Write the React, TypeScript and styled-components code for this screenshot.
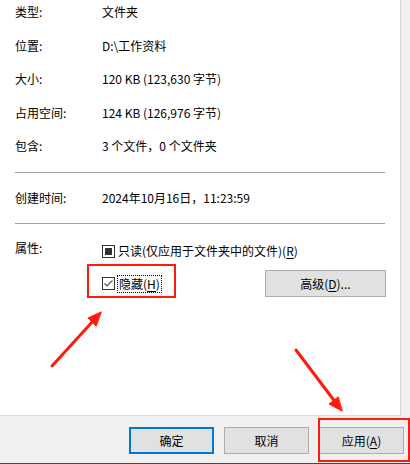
import React from "react";
import styled, { createGlobalStyle } from "styled-components";

const Global = createGlobalStyle`
  html, body {
    margin: 0;
    padding: 0;
    background: #f0f0f0;
  }
  body {
    font-family: "Noto Sans CJK SC", "Microsoft YaHei", sans-serif;
    font-size: 12px;
    color: #000000;
  }
`;

const Dialog = styled.div`
  position: relative;
  width: 410px;
  height: 464px;
  overflow: hidden;
  display: flex;
  flex-direction: column;
  background: #f0f0f0;
`;

const Panel = styled.div`
  width: 401px;
  height: 416px;
  box-sizing: border-box;
  background: #ffffff;
  border-right: 1px solid #d9d9d9;
  border-bottom: 1px solid #d9d9d9;
  padding: 4px 0 0 15px;
  display: flex;
  flex-direction: column;
`;

const InfoList = styled.div`
  display: flex;
  flex-direction: column;
  gap: 17.5px;
`;

const Row = styled.div`
  display: flex;
  height: 16px;
  align-items: center;
  line-height: 16px;
  white-space: nowrap;
`;

const Label = styled.span`
  width: 87px;
  flex: none;
`;

const Value = styled.span``;

const Divider = styled.div<{ $before: number; $after: number }>`
  width: 370px;
  height: 1px;
  background: #a0a0a0;
  margin: ${(p) => p.$before}px 0 ${(p) => p.$after}px;
`;

const AttrRow = styled.div`
  display: flex;
  white-space: nowrap;
`;

const AttrLabel = styled.span`
  width: 87px;
  flex: none;
  line-height: 16px;
  margin-top: -2px;
`;

const AttrBody = styled.div`
  display: flex;
  flex-direction: column;
  gap: 10px;
`;

const CheckLine = styled.div`
  display: flex;
  align-items: center;
  height: 18px;
`;

const Box = styled.span`
  width: 13px;
  height: 13px;
  box-sizing: border-box;
  border: 1px solid #333333;
  background: #ffffff;
  display: inline-flex;
  align-items: center;
  justify-content: center;
  flex: none;
`;

const Fill = styled.span`
  width: 7px;
  height: 7px;
  background: #333333;
`;

const CheckText = styled.span<{ $focus?: boolean }>`
  margin-left: ${(p) => (p.$focus ? "2px" : "3px")};
  padding: ${(p) => (p.$focus ? "0 1px" : "0")};
  border: ${(p) => (p.$focus ? "1px dotted #000000" : "none")};
  line-height: 16px;
`;

const Key = styled.span`
  text-decoration: underline;
  text-underline-offset: 2px;
`;

const HiddenLine = styled.div`
  display: flex;
  align-items: center;
`;

const Spacer = styled.div`
  width: 103px;
  flex: none;
`;

const Button = styled.button<{ $primary?: boolean; $w?: number }>`
  width: ${(p) => p.$w ?? 85}px;
  height: 27px;
  box-sizing: border-box;
  background: #e1e1e1;
  border: ${(p) => (p.$primary ? "2px solid #0078d7" : "1px solid #adadad")};
  font-family: inherit;
  font-size: 12px;
  color: #000000;
  padding: 0;
  flex: none;
`;

const Footer = styled.div`
  flex: 1;
  box-sizing: border-box;
  border-bottom: 1px solid #444444;
  display: flex;
  justify-content: flex-end;
  gap: 10px;
  padding: 11px 6px 0 0;
`;

const Mark = styled.div<{ $x: number; $y: number; $w: number; $h: number }>`
  position: absolute;
  left: ${(p) => p.$x}px;
  top: ${(p) => p.$y}px;
  width: ${(p) => p.$w}px;
  height: ${(p) => p.$h}px;
  box-sizing: border-box;
  border: 2px solid #ff1a0a;
  pointer-events: none;
`;

const Arrows = styled.svg`
  position: absolute;
  left: 0;
  top: 0;
  pointer-events: none;
`;

const info: [string, string][] = [
  ["类型:", "文件夹"],
  ["位置:", "D:\\工作资料"],
  ["大小:", "120 KB (123,630 字节)"],
  ["占用空间:", "124 KB (126,976 字节)"],
  ["包含:", "3 个文件，0 个文件夹"],
];

export default function App() {
  return (
    <Dialog>
      <Global />
      <Panel>
        <InfoList>
          {info.map(([k, v]) => (
            <Row key={k}>
              <Label>{k}</Label>
              <Value>{v}</Value>
            </Row>
          ))}
        </InfoList>
        <Divider $before={18} $after={17} />
        <Row>
          <Label>创建时间:</Label>
          <Value>2024年10月16日，11:23:59</Value>
        </Row>
        <Divider $before={17} $after={18} />
        <AttrRow>
          <AttrLabel>属性:</AttrLabel>
          <AttrBody>
            <CheckLine>
              <Box>
                <Fill />
              </Box>
              <CheckText>
                只读(仅应用于文件夹中的文件)(<Key>R</Key>)
              </CheckText>
            </CheckLine>
            <HiddenLine>
              <CheckLine>
                <Box>
                  <svg width="11" height="11" viewBox="0 0 11 11">
                    <path d="M1.5 5.5 L4 8 L9.5 2.5" fill="none" stroke="#555" strokeWidth="1.2" />
                  </svg>
                </Box>
                <CheckText $focus>
                  隐藏(<Key>H</Key>)
                </CheckText>
              </CheckLine>
              <Spacer />
              <Button $w={121}>
                高级(<Key>D</Key>)...
              </Button>
            </HiddenLine>
          </AttrBody>
        </AttrRow>
      </Panel>
      <Footer>
        <Button $primary>确定</Button>
        <Button>取消</Button>
        <Button>
          应用(<Key>A</Key>)
        </Button>
      </Footer>

      <Mark $x={87} $y={264} $w={89} $h={34} />
      <Mark $x={318} $y={418} $w={92} $h={44} />
      <Arrows width="410" height="464" viewBox="0 0 410 464">
        <g stroke="#ff1a0a" strokeWidth="3" strokeLinecap="round" fill="#ff1a0a">
          <line x1="52" y1="366" x2="94" y2="320" />
          <polygon points="101,312 88,318 96,326" strokeWidth="1" />
          <line x1="296" y1="350" x2="336" y2="403" />
          <polygon points="342,411 329,404 338,397" strokeWidth="1" />
        </g>
      </Arrows>
    </Dialog>
  );
}
